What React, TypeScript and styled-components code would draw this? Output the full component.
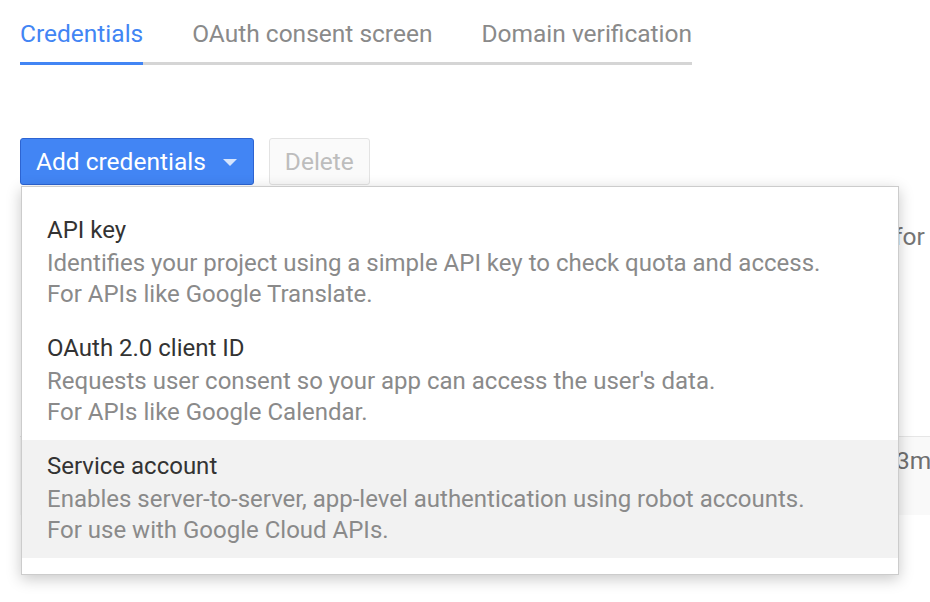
import React from "react";
import styled, { createGlobalStyle } from "styled-components";

const GlobalStyle = createGlobalStyle`
  html, body {
    margin: 0;
    padding: 0;
    background: #ffffff;
    overflow: hidden;
  }
  body {
    font-family: Roboto, "Liberation Sans", Arial, sans-serif;
  }
`;

const Page = styled.div`
  width: 930px;
  height: 602px;
  box-sizing: border-box;
  padding: 18px 0 0 20px;
  overflow: hidden;
  position: relative;
`;

const TabBar = styled.nav`
  display: inline-flex;
  border-bottom: 3px solid #d5d5d5;
`;

const Tab = styled.div<{ $active?: boolean }>`
  font-size: 24.5px;
  line-height: 32px;
  padding-bottom: 12px;
  margin-bottom: -3px;
  border-bottom: 3px solid ${(p) => (p.$active ? "#4285f4" : "transparent")};
  color: ${(p) => (p.$active ? "#4285f4" : "#8a8a8a")};
  white-space: nowrap;
  & + & {
    margin-left: 49px;
  }
`;

const Toolbar = styled.div`
  margin-top: 73px;
  display: flex;
  gap: 15px;
`;

const MenuAnchor = styled.div`
  position: relative;
`;

const BaseButton = styled.button`
  height: 47px;
  box-sizing: border-box;
  border-radius: 3px;
  font-family: inherit;
  font-size: 24.5px;
  display: flex;
  align-items: center;
  cursor: pointer;
`;

const AddButton = styled(BaseButton)`
  padding: 0 16px 0 15px;
  gap: 17px;
  background: #4285f4;
  border: 1px solid #2d64d2;
  color: #ffffff;
`;

const Caret = styled.span`
  width: 0;
  height: 0;
  border-left: 7.5px solid transparent;
  border-right: 7.5px solid transparent;
  border-top: 7px solid rgba(255, 255, 255, 0.78);
  margin-top: 2px;
`;

const DeleteButton = styled(BaseButton)`
  padding: 0 15px;
  background: #fafafa;
  border: 1px solid #e3e3e3;
  color: #bdbdbd;
  cursor: default;
`;

const Menu = styled.ul`
  position: absolute;
  top: 100%;
  left: 1px;
  margin: 1px 0 0;
  width: 878px;
  box-sizing: border-box;
  list-style: none;
  padding: 17px 0 16px;
  background: #ffffff;
  border: 1px solid #cccccc;
  box-shadow: 0 4px 14px rgba(0, 0, 0, 0.22);
  z-index: 10;
`;

const MenuItem = styled.li<{ $hover?: boolean }>`
  padding: 10px 24px 12px 25px;
  background: ${(p) => (p.$hover ? "#f2f2f2" : "transparent")};
  font-size: 24px;
  line-height: 32px;
  white-space: nowrap;
`;

const ItemTitle = styled.div`
  color: #333333;
  margin-bottom: 1px;
`;

const ItemDesc = styled.div`
  color: #8a8a8a;
  & + & {
    margin-top: -1px;
  }
`;

const Intro = styled.div`
  margin-top: 36px;
  display: grid;
  grid-template-columns: 874px 1fr;
  font-size: 24.5px;
  line-height: 32px;
  color: #757575;
  white-space: nowrap;
`;

const Cell = styled.div`
  overflow: hidden;
`;

const Table = styled.div`
  margin-top: 183px;
`;

const Row = styled.div`
  display: grid;
  grid-template-columns: 876px 1fr;
  align-items: start;
  height: 79px;
  box-sizing: border-box;
  padding-top: 8px;
  border-top: 1px solid #e6e6e6;
  background: #f9f9f9;
  font-size: 24.5px;
  line-height: 32px;
  color: #6f6f6f;
  white-space: nowrap;
`;

const items = [
  {
    title: "API key",
    lines: [
      "Identifies your project using a simple API key to check quota and access.",
      "For APIs like Google Translate.",
    ],
  },
  {
    title: "OAuth 2.0 client ID",
    lines: [
      "Requests user consent so your app can access the user's data.",
      "For APIs like Google Calendar.",
    ],
  },
  {
    title: "Service account",
    lines: [
      "Enables server-to-server, app-level authentication using robot accounts.",
      "For use with Google Cloud APIs.",
    ],
    hover: true,
  },
];

export default function App() {
  return (
    <>
      <GlobalStyle />
      <Page>
        <TabBar>
          <Tab $active>Credentials</Tab>
          <Tab>OAuth consent screen</Tab>
          <Tab>Domain verification</Tab>
        </TabBar>

        <Toolbar>
          <MenuAnchor>
            <AddButton>
              Add credentials
              <Caret />
            </AddButton>
            <Menu>
              {items.map((it) => (
                <MenuItem key={it.title} $hover={it.hover}>
                  <ItemTitle>{it.title}</ItemTitle>
                  {it.lines.map((l) => (
                    <ItemDesc key={l}>{l}</ItemDesc>
                  ))}
                </MenuItem>
              ))}
            </Menu>
          </MenuAnchor>
          <DeleteButton disabled>Delete</DeleteButton>
        </Toolbar>

        <Intro>
          <Cell />
          <Cell>for</Cell>
        </Intro>

        <Table>
          <Row>
            <Cell />
            <Cell>3mv</Cell>
          </Row>
        </Table>
      </Page>
    </>
  );
}
